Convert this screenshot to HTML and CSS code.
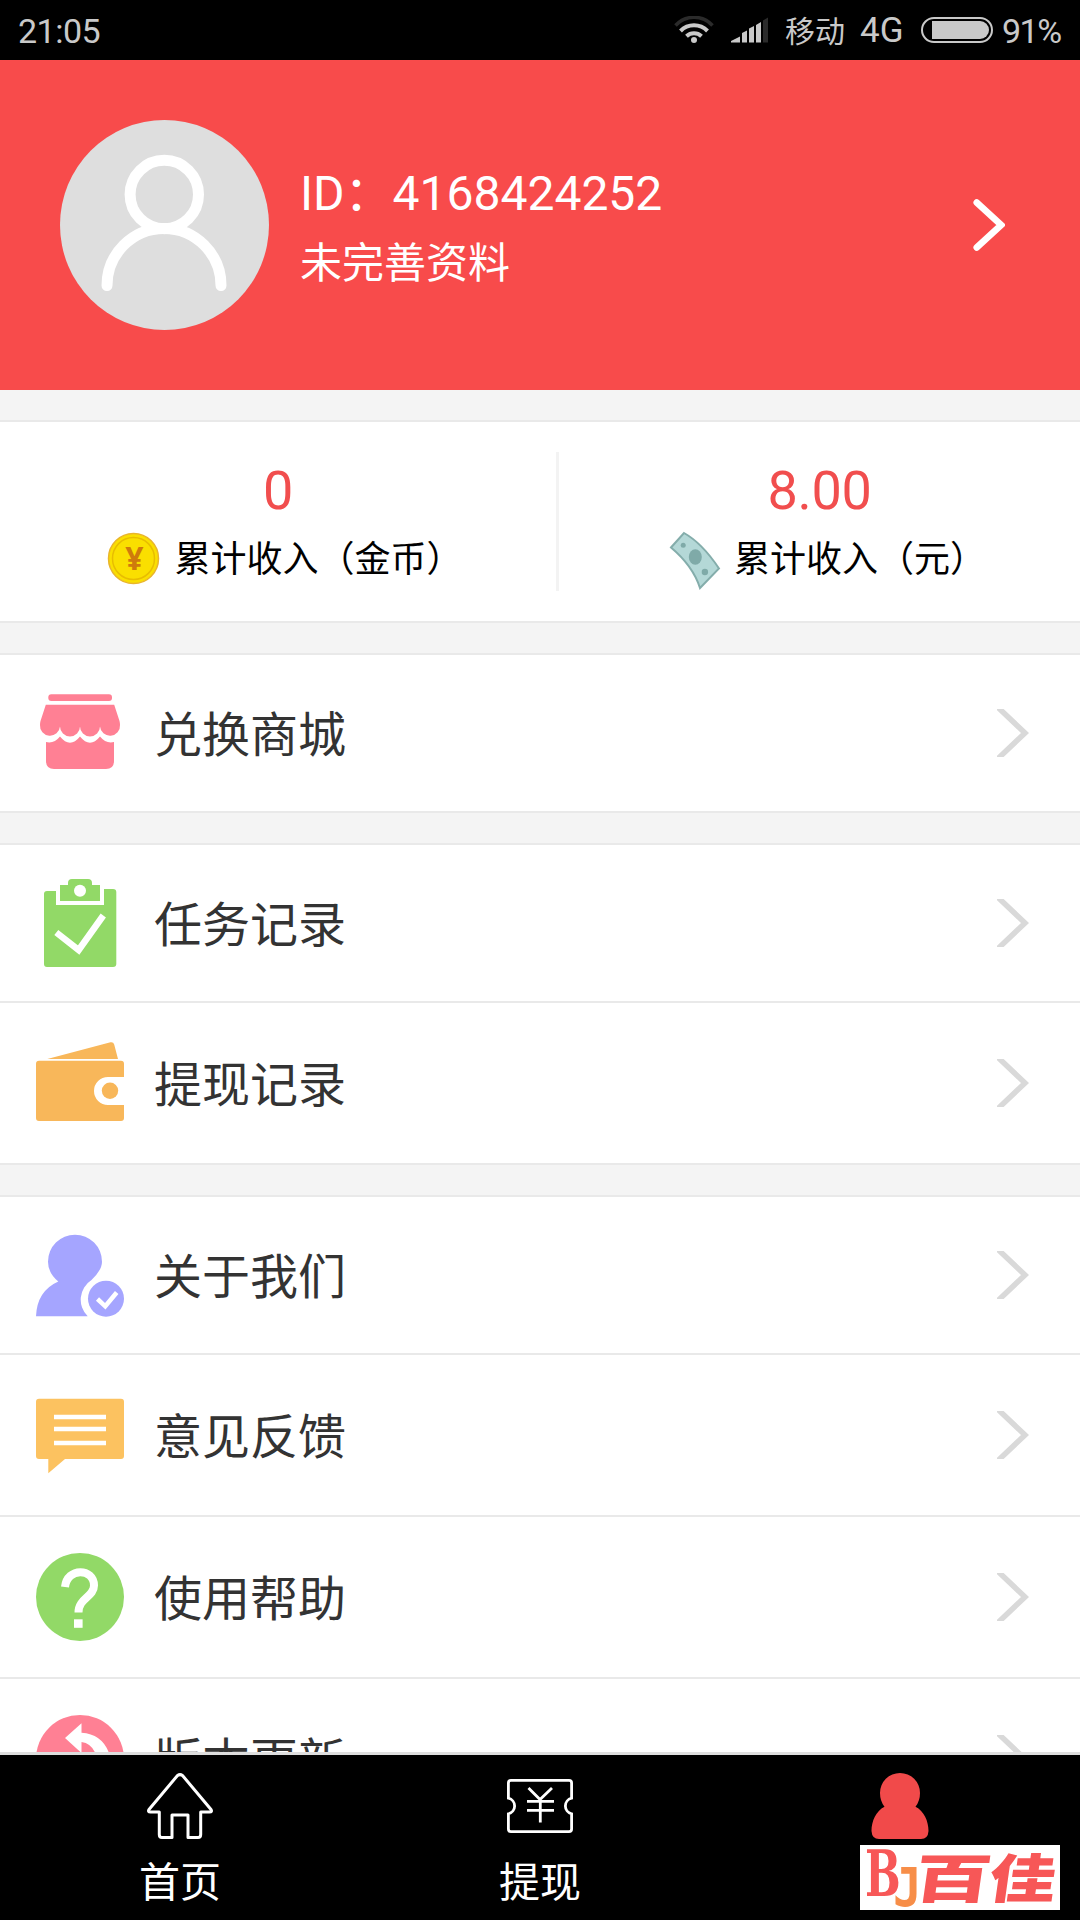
FILE: index.html
```html
<!DOCTYPE html>
<html lang="zh-CN">
<head>
<meta charset="utf-8">
<title>我的</title>
<link rel="stylesheet" href="styles.css">
</head>
<body>
<div class="app">
  <header class="status">
    <span class="status-time">21:05</span>
    <div class="status-right">
      <svg class="wifi" viewBox="0 0 40 28" fill="none" stroke="#c9c9c9" stroke-width="4">
        <path d="M1.5 9.5A25 25 0 0 1 38.5 9.5" stroke="#2b2b2b" stroke-width="3.5"/>
        <path d="M6.500 15A19 19 0 0 1 33.500 15"/>
        <path d="M12.500 20.300A11 11 0 0 1 27.500 20.300"/>
        <circle cx="20" cy="24" r="3" fill="#c9c9c9" stroke="none"/>
      </svg>
      <svg class="signal" viewBox="0 0 38 26" fill="#c9c9c9">
        <path d="M0 25.500V24L9 19.500V25.500ZM11 16 16 13.500V25.500H11ZM18 11.500 23 9V25.500H18ZM25 8 30 5V25.500H25Z"/>
        <path d="M32 3.500 37 .5V25.500H32Z" fill="#2b2b2b"/>
      </svg>
      <span class="carrier">移动</span>
      <span class="network">4G</span>
      <svg class="battery" viewBox="0 0 72 26">
        <rect x="1" y="1" width="70" height="24" rx="12" fill="none" stroke="#c9c9c9" stroke-width="2"/>
        <path d="M11 4H59A9 9 0 0 1 59 22H11Z" fill="#c9c9c9"/>
      </svg>
      <span class="percent">91%</span>
    </div>
  </header>

  <section class="profile">
    <svg class="avatar" viewBox="0 0 210 210">
      <ellipse cx="104.500" cy="105" rx="104.500" ry="105" fill="#dedede"/>
      <g fill="none" stroke="#fff" stroke-width="11" stroke-linecap="round">
        <circle cx="104.300" cy="74.500" r="34.200"/>
        <path d="M47 165.500A57 57 0 0 1 161 165.500"/>
      </g>
    </svg>
    <div class="profile-text">
      <div class="profile-id">ID：4168424252</div>
      <div class="profile-note">未完善资料</div>
    </div>
    <svg class="profile-arrow" viewBox="0 0 32 52" fill="none" stroke="#fff" stroke-width="6.500" stroke-linecap="round">
      <path d="M3.700 3.500 28.200 26 3.700 48.500"/>
    </svg>
  </section>

  <main class="content">
    <section class="group stats">
      <div class="stat">
        <div class="stat-value">0</div>
        <div class="stat-label">
          <svg class="stat-icon" viewBox="0 0 72 72">
            <circle cx="40.500" cy="33.500" r="25" fill="#fadf00" stroke="#e9b52c" stroke-width="1.500"/>
            <circle cx="40.500" cy="33.500" r="21" fill="none" stroke="#e8bd00" stroke-width="1.500"/>
            <text class="coin-sign" x="41.300" y="45" text-anchor="middle">¥</text>
          </svg>
          <span>累计收入（金币）</span>
        </div>
      </div>
      <div class="stat-divider"></div>
      <div class="stat">
        <div class="stat-value">8.00</div>
        <div class="stat-label">
          <svg class="stat-icon" viewBox="0 0 72 72">
            <path d="M31 8Q49 18 66 43.500L47 63Q40 41 18 22.500Z" fill="#b4d8d7" stroke="#84adab" stroke-width="2"/>
            <g fill="#7faaa8">
              <ellipse cx="42.300" cy="32" rx="6.500" ry="7.800"/>
              <circle cx="30.200" cy="20.300" r="2.500"/>
              <circle cx="51.900" cy="47" r="3.200"/>
            </g>
          </svg>
          <span>累计收入（元）</span>
        </div>
      </div>
    </section>

    <section class="group">
      <a class="row row-edge">
        <svg class="row-icon" viewBox="0 0 88 88" fill="#ff8094">
          <rect x="12.300" y="5.300" width="63.700" height="6.700" rx="3"/>
          <path d="M9.800 15.700H78.200L83.500 32Q84 34 84 36A10 10 0 0 1 64 37.500A10 10 0 0 1 44 37.500A10 10 0 0 1 24 37.500A10 10 0 0 1 4 36Q4 34 4.500 32Z"/>
          <path d="M10 53Q18 55 24 47.500Q34 60 44 47.500Q54 60 64 47.500Q70 55 78 53V72Q78 80 70 80H18Q10 80 10 72Z"/>
        </svg>
        <span class="row-title">兑换商城</span>
        <svg class="chevron" viewBox="0 0 32 48"><path d="M0 -2.500 28 24 0 50.500"/></svg>
      </a>
    </section>

    <section class="group">
      <a class="row row-edge">
        <svg class="row-icon" viewBox="0 0 88 88" fill="#92d967">
          <path d="M11 12H20V26H68V10H77Q80.300 10 80.300 13V85Q80.300 88 77 88H11Q8 88 8 85V15Q8 12 11 12Z"/>
          <path d="M24 6H32V4Q32 0 36 0H52Q56 0 56 4V6H64V22H24Z"/>
          <circle cx="44" cy="11.700" r="6" fill="#fff"/>
          <path d="M20.300 53.500 42.700 71 67.300 36.500" fill="none" stroke="#fff" stroke-width="6.500"/>
        </svg>
        <span class="row-title">任务记录</span>
        <svg class="chevron" viewBox="0 0 32 48"><path d="M0 -2.500 28 24 0 50.500"/></svg>
      </a>
      <a class="row">
        <svg class="row-icon" viewBox="0 0 88 88" fill="#f8b75a">
          <path d="M11.300 20 74.500 3.300Q77.500 2.800 78.200 5.500L82 20Z"/>
          <path d="M3 21.700H85Q88 21.700 88 24.700V38H72A14 14 0 0 0 72 66H88V79Q88 82 85 82H3Q0 82 0 79V24.700Q0 21.700 3 21.700Z"/>
          <circle cx="74" cy="51.800" r="8.200"/>
        </svg>
        <span class="row-title">提现记录</span>
        <svg class="chevron" viewBox="0 0 32 48"><path d="M0 -2.500 28 24 0 50.500"/></svg>
      </a>
    </section>

    <section class="group">
      <a class="row row-edge">
        <svg class="row-icon" viewBox="0 0 88 88" fill="#a5a5ff">
          <path d="M22.300 50.500Q12 42 12 30.700A27 27 0 0 1 66 30.700Q66 39 55.500 49A23.300 23.300 0 0 0 51.700 85.300H0Q1 60 22.300 50.500Z"/>
          <circle cx="70" cy="67.700" r="18"/>
          <path d="M61.500 68 69.300 75.300 80.700 61.500" fill="none" stroke="#fff" stroke-width="4.500"/>
        </svg>
        <span class="row-title">关于我们</span>
        <svg class="chevron" viewBox="0 0 32 48"><path d="M0 -2.500 28 24 0 50.500"/></svg>
      </a>
      <a class="row">
        <svg class="row-icon" viewBox="0 0 88 88" fill="#fcc260">
          <path d="M3 7.700H85Q88 7.700 88 10.700V65Q88 68 85 68H29L12.300 82.300V68H3Q0 68 0 65V10.700Q0 7.700 3 7.700Z"/>
          <path d="M18 26H70M18 38H70M18 52H70" stroke="#fff" stroke-width="4.300"/>
        </svg>
        <span class="row-title">意见反馈</span>
        <svg class="chevron" viewBox="0 0 32 48"><path d="M0 -2.500 28 24 0 50.500"/></svg>
      </a>
      <a class="row">
        <svg class="row-icon" viewBox="0 0 88 88">
          <circle cx="44" cy="44" r="44" fill="#92d967"/>
          <path d="M29 34C31 14 58 15 58 32.500C58 44 42.500 45 42.500 59.500" fill="none" stroke="#fff" stroke-width="8"/>
          <rect x="38" y="66.300" width="8.600" height="8.500" fill="#fff"/>
        </svg>
        <span class="row-title">使用帮助</span>
        <svg class="chevron" viewBox="0 0 32 48"><path d="M0 -2.500 28 24 0 50.500"/></svg>
      </a>
      <a class="row">
        <svg class="row-icon" viewBox="0 0 88 88">
          <circle cx="44" cy="44" r="44" fill="#ff8094"/>
          <path d="M29 23 45.500 8.300V17.700Q66 19 73 38V50H62Q60 29 45.500 27V38Z" fill="#fff"/>
        </svg>
        <span class="row-title">版本更新</span>
        <svg class="chevron" viewBox="0 0 32 48"><path d="M0 -2.500 28 24 0 50.500"/></svg>
      </a>
    </section>
  </main>

  <nav class="tabs">
    <a class="tab">
      <svg class="tab-icon" viewBox="0 0 66 66" fill="none" stroke="#fff" stroke-width="3" stroke-linejoin="round">
        <path d="M30.500 2.500Q33 .8 35.500 2.500L64 36.500Q65.500 39 62.500 39H53.700V61.500Q53.700 64.500 51 64.500H41V42H25V64.500H15Q12.300 64.500 12.300 61.500V39H3.500Q.5 39 2 36.500Z"/>
      </svg>
      <span class="tab-title">首页</span>
    </a>
    <a class="tab">
      <svg class="tab-icon" viewBox="0 0 66 66" fill="none" stroke="#fff" stroke-width="2.800">
        <path d="M4 7.300H62Q64.600 7.300 64.600 10V25.200A8 8 0 0 0 64.600 40.800V56Q64.600 58.700 62 58.700H4Q1.400 58.700 1.400 56V40.800A8 8 0 0 0 1.400 25.200V10Q1.400 7.300 4 7.300Z"/>
        <path d="M21.500 15 33 26.500 45 15M20 28.300H47M20 37.300H47M33.300 26V49.500"/>
      </svg>
      <span class="tab-title">提现</span>
    </a>
    <a class="tab">
      <svg class="tab-icon" viewBox="0 0 66 66" fill="#f14a4a">
        <path d="M17.500 33.700Q13 28 13 20A20 20 0 0 1 53 20Q53 28 48.500 33.700C57 38 61.500 48 61.500 58Q61 66 54 66H12Q5 66 4.500 58C4.500 48 9 38 17.500 33.700Z"/>
      </svg>
    </a>
    <svg class="brand" viewBox="0 0 200 65">
      <rect width="200" height="65" fill="#fff"/>
      <text class="brand-b" transform="translate(5 51) scale(.66 1)">B</text>
      <text class="brand-j" transform="translate(33 61) scale(.9 1)">J</text>
      <g class="brand-name">
        <text transform="translate(52 53) skewX(-8) scale(1.370 .94)">百</text>
        <text transform="translate(127 53) skewX(-8) scale(1.190 .94)">佳</text>
      </g>
    </svg>
  </nav>
</div>
</body>
</html>
```
FILE: styles.css
```css
* {
  box-sizing: border-box;
}

body {
  margin: 0;
  background: #f4f4f4;
  font-family: Roboto, "Noto Sans CJK SC", sans-serif;
}

svg {
  display: block;
  flex: none;
}

.app {
  display: flex;
  flex-direction: column;
  width: 1080px;
  height: 1920px;
  overflow: hidden;
}

/* Status bar */
.status {
  display: flex;
  flex: none;
  align-items: center;
  justify-content: space-between;
  height: 60px;
  padding: 0 19px 0 18px;
  background: #000;
  color: #c9c9c9;
  font-size: 34px;
  line-height: 60px;
}

.status-time,
.network,
.percent {
  padding-top: 2px;
}

.status-time {
  letter-spacing: -.5px;
}

.status-right {
  display: flex;
  align-items: center;
}

.wifi {
  width: 40px;
  height: 28px;
  margin-right: 17px;
}

.signal {
  width: 38px;
  height: 26px;
  margin-right: 16px;
}

.carrier {
  width: 60px;
  padding-top: 3px;
  margin-right: 15px;
  font-size: 30px;
}

.network {
  width: 46px;
  margin-right: 15px;
  font-size: 35px;
}

.battery {
  width: 72px;
  height: 26px;
  margin-right: 9px;
}

.percent {
  width: 59px;
  letter-spacing: -1.500px;
}

/* Profile */
.profile {
  display: flex;
  flex: none;
  align-items: center;
  height: 330px;
  padding: 0 75px 0 60px;
  background: #f84b4b;
  color: #fff;
}

.avatar {
  width: 210px;
  height: 210px;
}

.profile-text {
  flex: 1;
  padding: 8px 0 0 30px;
}

.profile-id {
  font-size: 48px;
  line-height: 69px;
}

.profile-note {
  font-size: 42px;
  line-height: 71px;
}

.profile-arrow {
  width: 32px;
  height: 52px;
}

/* Scrolling content */
.content {
  display: flex;
  flex: 1;
  flex-direction: column;
  gap: 30px;
  min-height: 0;
  padding-top: 30px;
  overflow: hidden;
}

.group {
  flex: none;
  border-top: 2px solid #e9e9e9;
  border-bottom: 2px solid #e9e9e9;
  background: #fff;
}

.stats {
  display: flex;
  align-items: center;
  height: 203px;
}

.stat {
  display: flex;
  flex: 1 1 0;
  flex-direction: column;
  align-items: center;
  padding-top: 13px;
}

.stat:first-child {
  flex: 0 0 556px;
}

.stat-divider {
  width: 3px;
  height: 139px;
  background: #f3f3f3;
}

.stat-value {
  color: #f14e4e;
  font-size: 54px;
  line-height: 64px;
  letter-spacing: -.3px;
}

.stat-label {
  display: flex;
  gap: 9px;
  padding-top: 2px;
  color: #000;
  font-size: 36px;
  line-height: 70px;
}

.stat-icon {
  width: 72px;
  height: 72px;
}

.coin-sign {
  fill: #cf7a0c;
  font: bold 32px "Noto Sans", sans-serif;
}

.row {
  display: flex;
  align-items: center;
  height: 162px;
  padding: 0 51px 0 36px;
  border-top: 2px solid #e9e9e9;
  color: #333;
}

.row-edge {
  height: 156px;
  border-top: 0;
}

.row-icon {
  width: 88px;
  height: 88px;
}

.row-title {
  flex: 1;
  padding: 6px 0 0 30px;
  font-size: 48px;
  line-height: 80px;
}

.chevron {
  width: 32px;
  height: 48px;
  fill: none;
  stroke: #d9d9d9;
  stroke-width: 5.500px;
}

/* Bottom tabs */
.tabs {
  position: relative;
  display: grid;
  flex: none;
  grid-template-columns: repeat(3, 1fr);
  height: 168px;
  border-top: 3px solid #dedede;
  background: #000;
}

.tab {
  display: flex;
  flex-direction: column;
  align-items: center;
  padding-top: 18px;
  color: #fff;
}

.tab-icon {
  width: 66px;
  height: 66px;
}

.tab-title {
  margin-top: 13px;
  font-size: 41px;
  line-height: 62px;
}

.brand {
  position: absolute;
  right: 20px;
  bottom: 10px;
  width: 200px;
  height: 65px;
}

.brand-b {
  fill: #f75757;
  font: bold 64px "DejaVu Serif", serif;
}

.brand-j {
  fill: #f78e48;
  font: bold 53px "DejaVu Sans Mono", monospace;
}

.brand-name {
  fill: #f75757;
  font: 900 56px "Noto Sans CJK SC", sans-serif;
}
```
